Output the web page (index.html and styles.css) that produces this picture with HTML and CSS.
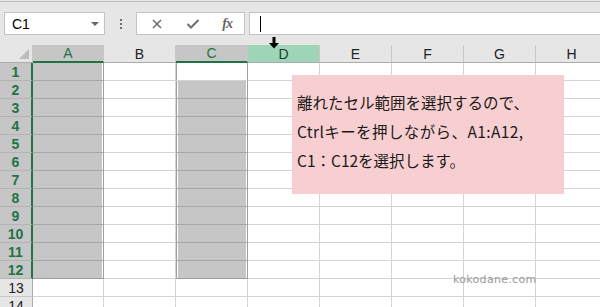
FILE: index.html
```html
<!DOCTYPE html>
<html lang="ja">
<head>
  <meta charset="UTF-8">
  <title>セル範囲の選択</title>
  <link rel="stylesheet" href="styles.css">
</head>
<body>

  <div class="top">
    <div class="topline"></div>
    <div class="formula-row">
      <div class="namebox">
        <span>C1</span>
        <span class="drop"></span>
      </div>
      <div class="kebab"><i></i><i></i><i></i></div>
      <div class="fbuttons">
        <svg class="ficon" width="12" height="12" viewBox="0 0 12 12">
          <path d="M2 2 L10 10 M10 2 L2 10" stroke="#6e6e6e" stroke-width="1.6" fill="none"/>
        </svg>
        <svg class="ficon" width="14" height="12" viewBox="0 0 14 12">
          <path d="M1.5 6 L5 9.5 L12.5 2" stroke="#6e6e6e" stroke-width="2" fill="none"/>
        </svg>
        <span class="fx">fx</span>
      </div>
      <div class="finput"><span class="caret"></span></div>
    </div>
  </div>

  <div class="sheet" id="sheet"></div>

  <svg class="col-arrow" width="12" height="12" viewBox="0 0 12 12">
    <path d="M4.5 0 H7.5 V6 H11 L6 11.5 L1 6 H4.5 Z" fill="#000"/>
  </svg>

  <div class="note">
    <p>離れたセル範囲を選択するので、</p>
    <p>Ctrlキーを押しながら、A1:A12,</p>
    <p>C1：C12を選択します。</p>
  </div>

  <div class="watermark">kokodane.com</div>

  <script>
    const sheet = document.getElementById("sheet");
    const cols = ["A", "B", "C", "D", "E", "F", "G", "H"];

    let html = '<div class="corner"><span></span></div>';
    cols.forEach((c) => {
      let cls = "hdr";
      if (c === "A" || c === "C") cls += " sel";
      if (c === "D") cls += " hover";
      html += `<div class="${cls}">${c}</div>`;
    });

    for (let r = 1; r <= 14; r++) {
      html += `<div class="rh${r <= 12 ? " sel" : ""}">${r}</div>`;
      cols.forEach((c) => {
        let cls = "cell";
        if (r <= 12 && c === "A") cls += " a-sel";
        if (r <= 12 && c === "C") cls += r === 1 ? " c-sel active" : " c-sel";
        if (r === 12 && (c === "A" || c === "C")) cls += " last";
        html += `<div class="${cls}"></div>`;
      });
    }

    sheet.innerHTML = html;
  </script>

</body>
</html>
```

FILE: styles.css
```css
body {
  margin: 0;
  width: 600px;
  height: 307px;
  overflow: hidden;
  position: relative;
  background: #ffffff;
  font-family: "Liberation Sans", Arial, sans-serif;
}

/* formula bar */
.top {
  height: 45px;
  padding-top: 1px;
  box-sizing: border-box;
  background: #e6e6e6;
}
.topline {
  height: 1px;
  background: #bdbdbd;
}
.formula-row {
  display: flex;
  height: 23px;
  margin-top: 10px;
}
.namebox {
  width: 101px;
  margin-left: 4px;
  box-sizing: border-box;
  border: 1px solid #c3c3c3;
  background: #fff;
  display: flex;
  align-items: center;
  justify-content: space-between;
  padding: 0 5px 0 7px;
  font-size: 14px;
  color: #000;
}
.drop {
  width: 0;
  height: 0;
  border-left: 4px solid transparent;
  border-right: 4px solid transparent;
  border-top: 4px solid #666;
}
.kebab {
  width: 31px;
  display: flex;
  flex-direction: column;
  align-items: center;
  justify-content: center;
  gap: 2px;
}
.kebab i {
  width: 2px;
  height: 2px;
  background: #6e6e6e;
}
.fbuttons {
  width: 109px;
  box-sizing: border-box;
  border: 1px solid #c3c3c3;
  background: #fff;
  display: flex;
  align-items: center;
  justify-content: space-between;
  padding: 0 12px 0 14px;
}
.fx {
  font-family: "Liberation Serif", serif;
  font-style: italic;
  font-weight: bold;
  font-size: 14px;
  color: #666;
  letter-spacing: -1px;
}
.finput {
  flex: 1;
  margin-left: 4px;
  border: 1px solid #c3c3c3;
  border-right: none;
  background: #fff;
  display: flex;
  align-items: center;
  padding-left: 10px;
}
.caret {
  width: 1px;
  height: 16px;
  background: #000;
}

/* grid */
.sheet {
  display: grid;
  grid-template-columns: 33px 71px repeat(7, 72px);
  grid-auto-rows: 18px;
}
.corner,
.hdr,
.rh,
.cell {
  box-sizing: border-box;
}
.corner {
  background: #e6e6e6;
  border-right: 1px solid #c8c8c8;
  border-bottom: 1px solid #ababab;
  position: relative;
}
.corner span {
  position: absolute;
  right: 3px;
  bottom: 3px;
  width: 0;
  height: 0;
  border-left: 10px solid transparent;
  border-bottom: 10px solid #bcbcbc;
}
.hdr {
  background: #e6e6e6;
  border-right: 1px solid #c8c8c8;
  border-bottom: 1px solid #ababab;
  font-size: 14px;
  color: #222;
  display: flex;
  align-items: center;
  justify-content: center;
}
.hdr.sel {
  background: #c6c6c6;
  color: #217346;
  border-bottom: 2px solid #217346;
}
.hdr.hover {
  background: #9fd5b7;
  color: #1c3d2a;
}
.rh {
  background: #e6e6e6;
  border-right: 1px solid #ababab;
  border-bottom: 1px solid #c8c8c8;
  font-size: 14px;
  color: #222;
  display: flex;
  align-items: center;
  justify-content: center;
}
.rh.sel {
  background: #c6c6c6;
  border-right: 2px solid #217346;
  border-bottom-color: #b4b4b4;
  color: #217346;
  font-weight: bold;
}
.cell {
  border-right: 1px solid #d4d4d4;
  border-bottom: 1px solid #d4d4d4;
}
.cell.a-sel {
  background: #c6c6c6;
  border-right-color: #9e9e9e;
  border-bottom-color: #a8a8a8;
  box-shadow: inset -1px 0 #fff;
}
.cell.c-sel {
  background: #c6c6c6;
  border-right-color: #9e9e9e;
  border-bottom-color: #a8a8a8;
  box-shadow: inset 1px 0 #9e9e9e, inset 2px 0 #fff, inset -1px 0 #fff;
}
.cell.c-sel.active {
  background: #fff;
  border-bottom-color: #d4d4d4;
}
.cell.last {
  border-bottom-color: #9e9e9e;
}

/* overlays */
.col-arrow {
  position: absolute;
  left: 268px;
  top: 37px;
}
.note {
  position: absolute;
  left: 292px;
  top: 75px;
  width: 272px;
  height: 119px;
  box-sizing: border-box;
  background: #f8cfd1;
  padding: 13px 0 0 5px;
  font-family: "Noto Sans CJK JP", sans-serif;
  font-size: 15.5px;
  line-height: 29px;
  color: #1a1a1a;
}
.note p {
  margin: 0;
  white-space: nowrap;
}
.note p:nth-child(2) {
  letter-spacing: 0.4px;
}
.watermark {
  position: absolute;
  left: 453px;
  top: 273px;
  font-family: "DejaVu Sans", sans-serif;
  font-size: 11px;
  color: #9a9a9a;
  letter-spacing: 0.3px;
}
```
